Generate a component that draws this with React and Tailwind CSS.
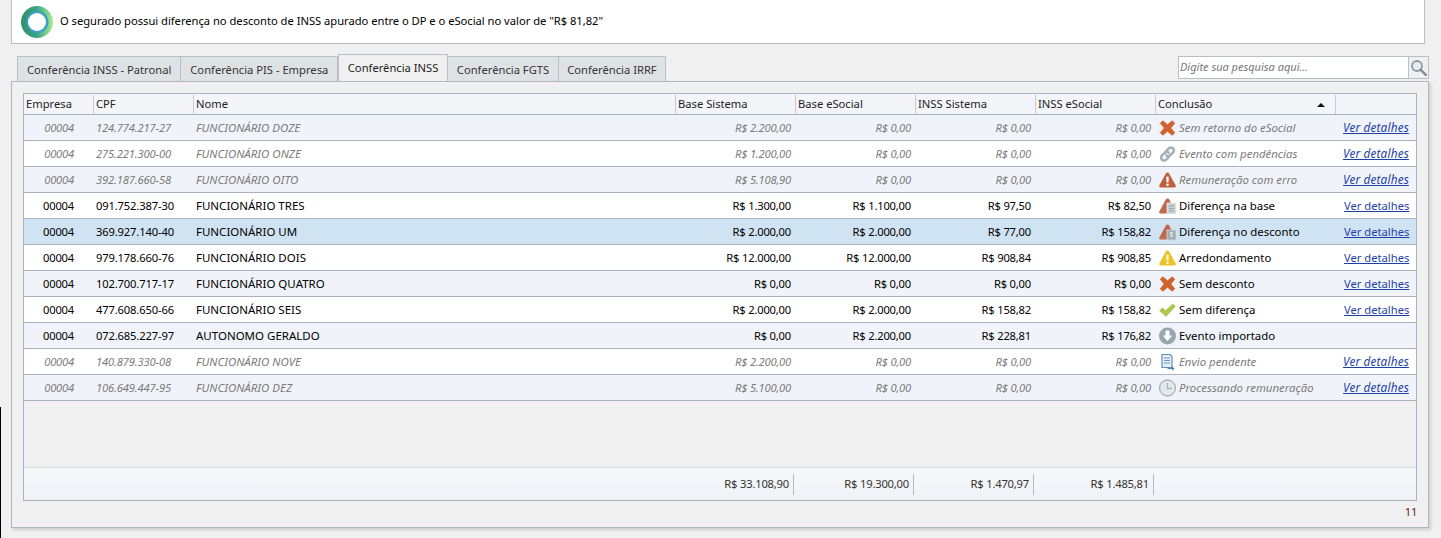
const FONT = "font-['Noto_Sans',sans-serif]"

const cols = "grid grid-cols-[70px_100px_482px_120px_120px_120px_120px_180px_81px]"

const rows = [
  ["00004", "124.774.217-27", "FUNCIONÁRIO DOZE", "R$ 2.200,00", "R$ 0,00", "R$ 0,00", "R$ 0,00", "x", "Sem retorno do eSocial", true, true],
  ["00004", "275.221.300-00", "FUNCIONÁRIO ONZE", "R$ 1.200,00", "R$ 0,00", "R$ 0,00", "R$ 0,00", "link", "Evento com pendências", true, true],
  ["00004", "392.187.660-58", "FUNCIONÁRIO OITO", "R$ 5.108,90", "R$ 0,00", "R$ 0,00", "R$ 0,00", "erro", "Remuneração com erro", true, true],
  ["00004", "091.752.387-30", "FUNCIONÁRIO TRES", "R$ 1.300,00", "R$ 1.100,00", "R$ 97,50", "R$ 82,50", "base", "Diferença na base", false, true],
  ["00004", "369.927.140-40", "FUNCIONÁRIO UM", "R$ 2.000,00", "R$ 2.000,00", "R$ 77,00", "R$ 158,82", "desc", "Diferença no desconto", false, true],
  ["00004", "979.178.660-76", "FUNCIONÁRIO DOIS", "R$ 12.000,00", "R$ 12.000,00", "R$ 908,84", "R$ 908,85", "warn", "Arredondamento", false, true],
  ["00004", "102.700.717-17", "FUNCIONÁRIO QUATRO", "R$ 0,00", "R$ 0,00", "R$ 0,00", "R$ 0,00", "x", "Sem desconto", false, true],
  ["00004", "477.608.650-66", "FUNCIONÁRIO SEIS", "R$ 2.000,00", "R$ 2.000,00", "R$ 158,82", "R$ 158,82", "check", "Sem diferença", false, true],
  ["00004", "072.685.227-97", "AUTONOMO GERALDO", "R$ 0,00", "R$ 2.200,00", "R$ 228,81", "R$ 176,82", "down", "Evento importado", false, false],
  ["00004", "140.879.330-08", "FUNCIONÁRIO NOVE", "R$ 2.200,00", "R$ 0,00", "R$ 0,00", "R$ 0,00", "doc", "Envio pendente", true, true],
  ["00004", "106.649.447-95", "FUNCIONÁRIO DEZ", "R$ 5.100,00", "R$ 0,00", "R$ 0,00", "R$ 0,00", "clock", "Processando remuneração", true, true],
]

function Triangle({ color, children }) {
  return (
    <svg width="19" height="18" viewBox="0 0 19 18">
      <path d="M9.500 1.500c.8 0 1.400.5 1.800 1.200l6.300 11.500c.6 1.100.1 2.300-1.300 2.300H2.700c-1.400 0-1.900-1.200-1.300-2.300L7.700 2.700c.4-.7 1-1.200 1.800-1.200z" fill={color} />
      {children}
    </svg>
  )
}

function StatusIcon({ name }) {
  if (name === "x") {
    return (
      <svg width="19" height="18" viewBox="0 0 18 18">
        <path d="M1.800 4.300 4.300 1.800 9 5.800l4.700-4 2.500 2.500L12.200 9l4 4.700-2.500 2.500L9 12.200l-4.700 4-2.500-2.500L5.800 9z" fill="#d4622c" stroke="#c4592a" strokeWidth="0.800" strokeLinejoin="round" />
      </svg>
    )
  }
  if (name === "link") {
    return (
      <svg width="19" height="18" viewBox="0 0 18 18" fill="none" stroke="#a3b1b8" strokeWidth="2.600" strokeLinecap="round">
        <path d="M7.800 5.800 10.300 3.300a2.800 2.800 0 0 1 4.200 4.200l-2.700 2.700a2.800 2.800 0 0 1-3.800.2" />
        <path d="M10.200 12.200 7.700 14.700a2.800 2.800 0 0 1-4.200-4.200l2.700-2.700a2.800 2.800 0 0 1 3.800-.2" />
      </svg>
    )
  }
  if (name === "erro") {
    return (
      <Triangle color="#c1613f">
        <rect x="8.400" y="5.500" width="2.200" height="6" rx="0.800" fill="#fff" />
        <circle cx="9.500" cy="13.800" r="1.300" fill="#fff" />
      </Triangle>
    )
  }
  if (name === "base") {
    return (
      <Triangle color="#c1684a">
        <rect x="9" y="6" width="9" height="11" fill="#c9d2d6" stroke="#e9edef" strokeWidth="0.800" />
        <path d="M11 9h5M11 11.500h5M11 14h5" stroke="#8e9ca3" strokeWidth="0.900" />
      </Triangle>
    )
  }
  if (name === "desc") {
    return (
      <Triangle color="#c1684a">
        <rect x="9" y="7" width="9" height="10" fill="#9fadb4" stroke="#d5dde1" strokeWidth="0.800" />
        <path d="M15 9.500h-2.500v2h2v2H12" fill="none" stroke="#e9edef" strokeWidth="1" />
      </Triangle>
    )
  }
  if (name === "warn") {
    return (
      <Triangle color="#eac32b">
        <rect x="8.400" y="5.500" width="2.200" height="6" rx="0.800" fill="#fff6cf" />
        <circle cx="9.500" cy="13.800" r="1.300" fill="#fff6cf" />
      </Triangle>
    )
  }
  if (name === "check") {
    return (
      <svg width="19" height="18" viewBox="0 0 18 18">
        <path d="M1 9.500 4 6.800l3 3 7-6.800 3 2.200-9.500 10.300z" fill="#adc94c" stroke="#9cbc3a" strokeWidth="0.500" strokeLinejoin="round" />
      </svg>
    )
  }
  if (name === "down") {
    return (
      <svg width="19" height="18" viewBox="0 0 18 18">
        <circle cx="9" cy="9" r="8.500" fill="#98a6ad" />
        <path d="M7 3.500h4v5h2.800L9 14 4.200 8.500H7z" fill="#fff" />
      </svg>
    )
  }
  if (name === "doc") {
    return (
      <svg width="19" height="18" viewBox="0 0 18 18">
        <path d="M3.500 1.500h8l2 2v11h-10z" fill="#e7eff6" stroke="#5d8fbd" strokeWidth="1.200" />
        <path d="M5.500 5h6M5.500 7.500h6M5.500 10h6" stroke="#6f98bd" strokeWidth="1" />
        <path d="M9 15.500h6l-1.500-1.500M15 15.500 13.500 17" fill="none" stroke="#4f86b8" strokeWidth="1.100" />
      </svg>
    )
  }
  return (
    <svg width="19" height="18" viewBox="0 0 18 18">
      <circle cx="9" cy="9" r="8" fill="#e4eaec" stroke="#a6b3b9" strokeWidth="1.300" />
      <path d="M9 3.800V9.500h4.500" fill="none" stroke="#a6b3b9" strokeWidth="1.300" />
    </svg>
  )
}

function Row({ row, index }) {
  const [empresa, cpf, nome, base, baseEs, inss, inssEs, icon, conclusao, muted, link] = row
  const selected = index === 4
  const bg = selected ? "bg-[#d0e3f3]" : index % 2 === 0 ? "bg-[#f0f4fa]" : "bg-white"
  const tone = muted ? "italic text-[#7b7b7b]" : "text-black"
  return (
    <div className={`${cols} h-[26px] items-center border-b border-[#aab3c0] pt-px text-[11.2px] ${bg} ${tone}`}>
      <span className="pr-[20px] text-right tracking-[-0.2px]">{empresa}</span>
      <span className="pl-[2px] tracking-[-0.15px]">{cpf}</span>
      <span className="pl-[2px] text-[11.5px]">{nome}</span>
      <span className="pr-[5px] text-right tracking-[-0.2px]">{base}</span>
      <span className="pr-[5px] text-right tracking-[-0.2px]">{baseEs}</span>
      <span className="pr-[5px] text-right tracking-[-0.2px]">{inss}</span>
      <span className="pr-[5px] text-right tracking-[-0.2px]">{inssEs}</span>
      <span className="flex items-center gap-[2px] pl-[2px] text-[11.4px]">
        <StatusIcon name={icon} />
        {conclusao}
      </span>
      {link && (
        <span className={`${muted ? "pl-[7px] text-[11.8px] tracking-[0.15px]" : "pl-[8px] text-[11.2px]"} text-[#1e3fa8] underline`}>
          Ver detalhes
        </span>
      )}
    </div>
  )
}

function Tab({ label, active, className = "px-[9px]" }) {
  if (active) {
    return (
      <div className="relative z-10 -mt-[2px] flex h-[27px] items-center border border-b-0 border-[#b8bfc7] bg-[#f0f0f0] px-[8.5px] text-[11.2px] text-[#222]">
        {label}
      </div>
    )
  }
  return (
    <div className={`-ml-px flex h-[25px] items-center border border-b-0 border-[#b8bfc7] bg-[#dfe2e5] pt-[2px] text-[11.2px] text-[#333] first:ml-0 ${className}`}>
      {label}
    </div>
  )
}

function App() {
  const headers = ["Empresa", "CPF", "Nome", "Base Sistema", "Base eSocial", "INSS Sistema", "INSS eSocial"]
  const totals = ["R$ 33.108,90", "R$ 19.300,00", "R$ 1.470,97", "R$ 1.485,81"]
  return (
    <div className={`relative h-[538px] w-[1441px] overflow-hidden bg-[#f0f0f0] ${FONT}`}>
      <div className="absolute bottom-0 left-0 top-[407px] w-px bg-black" />

      <div className="ml-[11px] flex h-[44px] w-[1414px] items-center border border-t-0 border-[#bcbcbc] bg-white pl-[8px] text-[11.2px] tracking-[-0.02px] text-black">
        <svg width="34" height="34" viewBox="0 0 34 34" className="mr-[6px]">
          <defs>
            <linearGradient id="ring" x1="0" y1="0.500" x2="1" y2="0.500">
              <stop offset="0" stopColor="#2f8f6a" />
              <stop offset="0.500" stopColor="#3aa58a" />
              <stop offset="1" stopColor="#a9ee8e" />
            </linearGradient>
          </defs>
          <circle cx="17" cy="17" r="16" fill="url(#ring)" />
          <circle cx="17.500" cy="17" r="11" fill="#3f9fc4" />
          <circle cx="17" cy="17" r="9" fill="#fff" />
        </svg>
        O segurado possui diferença no desconto de INSS apurado entre o DP e o eSocial no valor de "R$ 81,82"
      </div>

      <div className="ml-[17px] mr-[12px] mt-[12px] flex h-[25px] items-end">
        <Tab label="Conferência INSS - Patronal" />
        <Tab label="Conferência PIS - Empresa" />
        <Tab label="Conferência INSS" active />
        <Tab label="Conferência FGTS" />
        <Tab label="Conferência IRRF" className="px-[8px]" />
        <div className="ml-auto mb-[2px] flex h-[23px] w-[251px] border border-[#b8bfc7] bg-white">
          <span className="flex-1 pl-[1px] text-[11px] italic leading-[20px] text-[#777]">Digite sua pesquisa aqui...</span>
          <span className="flex w-[20px] items-center justify-center border-l border-[#b8bfc7] bg-[#f0f0f0]">
            <svg width="17" height="17" viewBox="0 0 17 17" fill="none">
              <circle cx="7" cy="7" r="5" stroke="#8d9ca3" strokeWidth="1.800" fill="#e6ecef" />
              <path d="m10.800 10.800 5 5" stroke="#7d8d94" strokeWidth="2.400" strokeLinecap="round" />
            </svg>
          </span>
        </div>
      </div>

      <div className="ml-[11px] flex h-[447px] w-[1418px] flex-col border border-[#b0b6bd] bg-[#f0f0f0] pl-[11px] pr-[11px] pt-[11px] shadow-[2px_2px_3px_rgba(0,0,0,0.15)]">
        <div className="flex h-[408px] w-[1394px] flex-col border border-[#aab3c0]">
          <div className={`${cols} h-[21px] border-b border-[#aab3c0] bg-[#f3f5f9] pt-px text-[11.2px] text-[#222]`}>
            {headers.map((h) => (
              <span key={h} className="flex items-center border-r border-[#c5cbd3] pl-[2px]">{h}</span>
            ))}
            <span className="flex items-center justify-between border-r border-[#c5cbd3] pl-[2px] pr-[10px]">
              Conclusão
              <svg width="8" height="4" viewBox="0 0 8 4"><path d="M0 4 4 0l4 4z" fill="#111" /></svg>
            </span>
            <span />
          </div>

          {rows.map((row, i) => (
            <Row key={row[1]} row={row} index={i} />
          ))}

          <div className="flex-1" />

          <div className={`${cols} h-[33px] items-center border-t border-[#d8d8d8] bg-gradient-to-b from-[#f6f7f9] to-[#eff3f8] text-[11.2px] tracking-[-0.2px] text-[#333]`}>
            <span />
            <span />
            <span />
            {totals.map((t) => (
              <span key={t} className="flex h-[21px] items-center justify-end border-r border-[#b4b9bf] pr-[4px] -translate-x-[2px]">{t}</span>
            ))}
          </div>
        </div>
        <div className="mt-[3px] text-right text-[11.2px] tracking-[-0.3px] text-[#6b1030]">11</div>
      </div>
    </div>
  )
}

export default App
